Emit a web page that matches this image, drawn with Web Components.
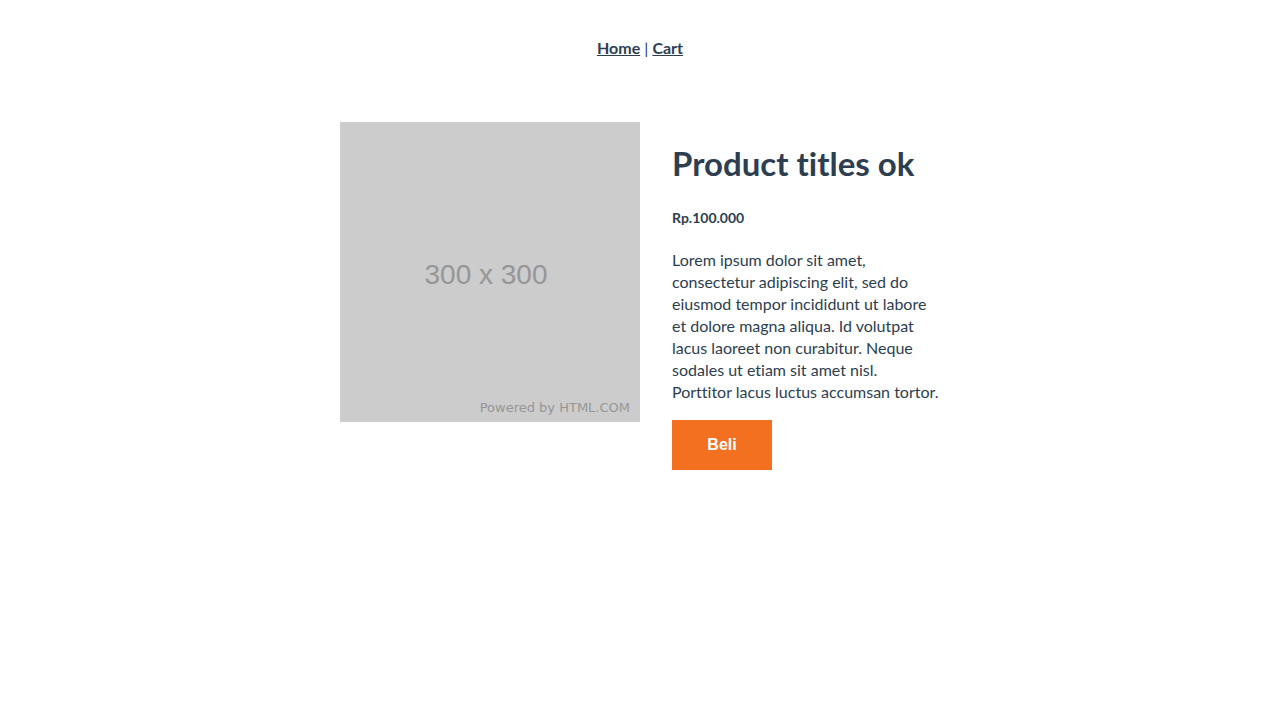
<!DOCTYPE html>
<html lang="en">
<head>
<meta charset="utf-8">
<title>Product</title>
<style>
body { margin: 0; background: #fff; color: #2c3e50; font: 16px/22px Avenir, Lato, Helvetica, Arial, sans-serif; font-variant-ligatures: none; }
</style>
</head>
<body>
<shop-app></shop-app>
<script>
class BaseElement extends HTMLElement {
  connectedCallback() {
    if (!this.shadowRoot) this.attachShadow({ mode: "open" }).innerHTML = this.constructor.markup;
  }
}
customElements.define("shop-nav", class extends BaseElement {
  static markup = `<style>
    :host { display: block; padding: 37px 30px 31px; text-align: center; }
    a { color: inherit; font-weight: bold; }
  </style><nav><a href="#home">Home</a> | <a href="#cart">Cart</a></nav>`;
});
customElements.define("product-image", class extends BaseElement {
  static markup = `<style>
    :host { display: block; }
    svg { display: block; width: 100%; }
    .size { font: 28px "Liberation Sans Narrow", "Liberation Sans", Arial, sans-serif; }
    .credit { font: 13px "DejaVu Sans", Verdana, sans-serif; }
  </style><svg viewBox="0 0 300 300" role="img" aria-label="300 x 300 placeholder">
    <rect width="300" height="300" fill="#ccc"/>
    <g fill="#969696"><text class="size" x="146" y="162" text-anchor="middle">300 x 300</text>
    <text class="credit" x="290" y="290" text-anchor="end">Powered by HTML.COM</text></g></svg>`;
});
customElements.define("product-details", class extends BaseElement {
  static markup = `<style>
    :host { display: block; }
    h1 { margin: 20px 0 24px; font-size: 33px; line-height: 42px; }
    h5 { margin: 0 0 21px; font-size: 14px; line-height: 20px; }
    p { margin: 0 0 17px; }
    button { width: 100px; height: 50px; padding: 0; border: 0; background: #f37021; color: #fff; font: bold 16px "Liberation Sans", Arial, sans-serif; cursor: pointer; }
  </style><h1><slot name="title"></slot></h1><h5><slot name="price"></slot></h5><p><slot></slot></p><button type="button">Beli</button>`;
});
customElements.define("shop-app", class extends BaseElement {
  static markup = `<style>
    :host { display: block; }
    main { display: grid; grid-template-columns: 300px minmax(0, 1fr); gap: 32px; align-items: start; max-width: 600px; margin: 32px auto 0; }
    @media (max-width: 600px) { main { grid-template-columns: minmax(0, 1fr); padding: 0 16px; } }
  </style><shop-nav></shop-nav><main><product-image></product-image><product-details>
    <span slot="title">Product titles ok</span><span slot="price">Rp.100.000</span>Lorem ipsum dolor sit amet, consectetur adipiscing elit, sed do eiusmod tempor incididunt ut labore et dolore magna aliqua. Id volutpat lacus laoreet non curabitur. Neque sodales ut etiam sit amet nisl. Porttitor lacus luctus accumsan tortor.</product-details></main>`;
});
</script>
</body>
</html>
